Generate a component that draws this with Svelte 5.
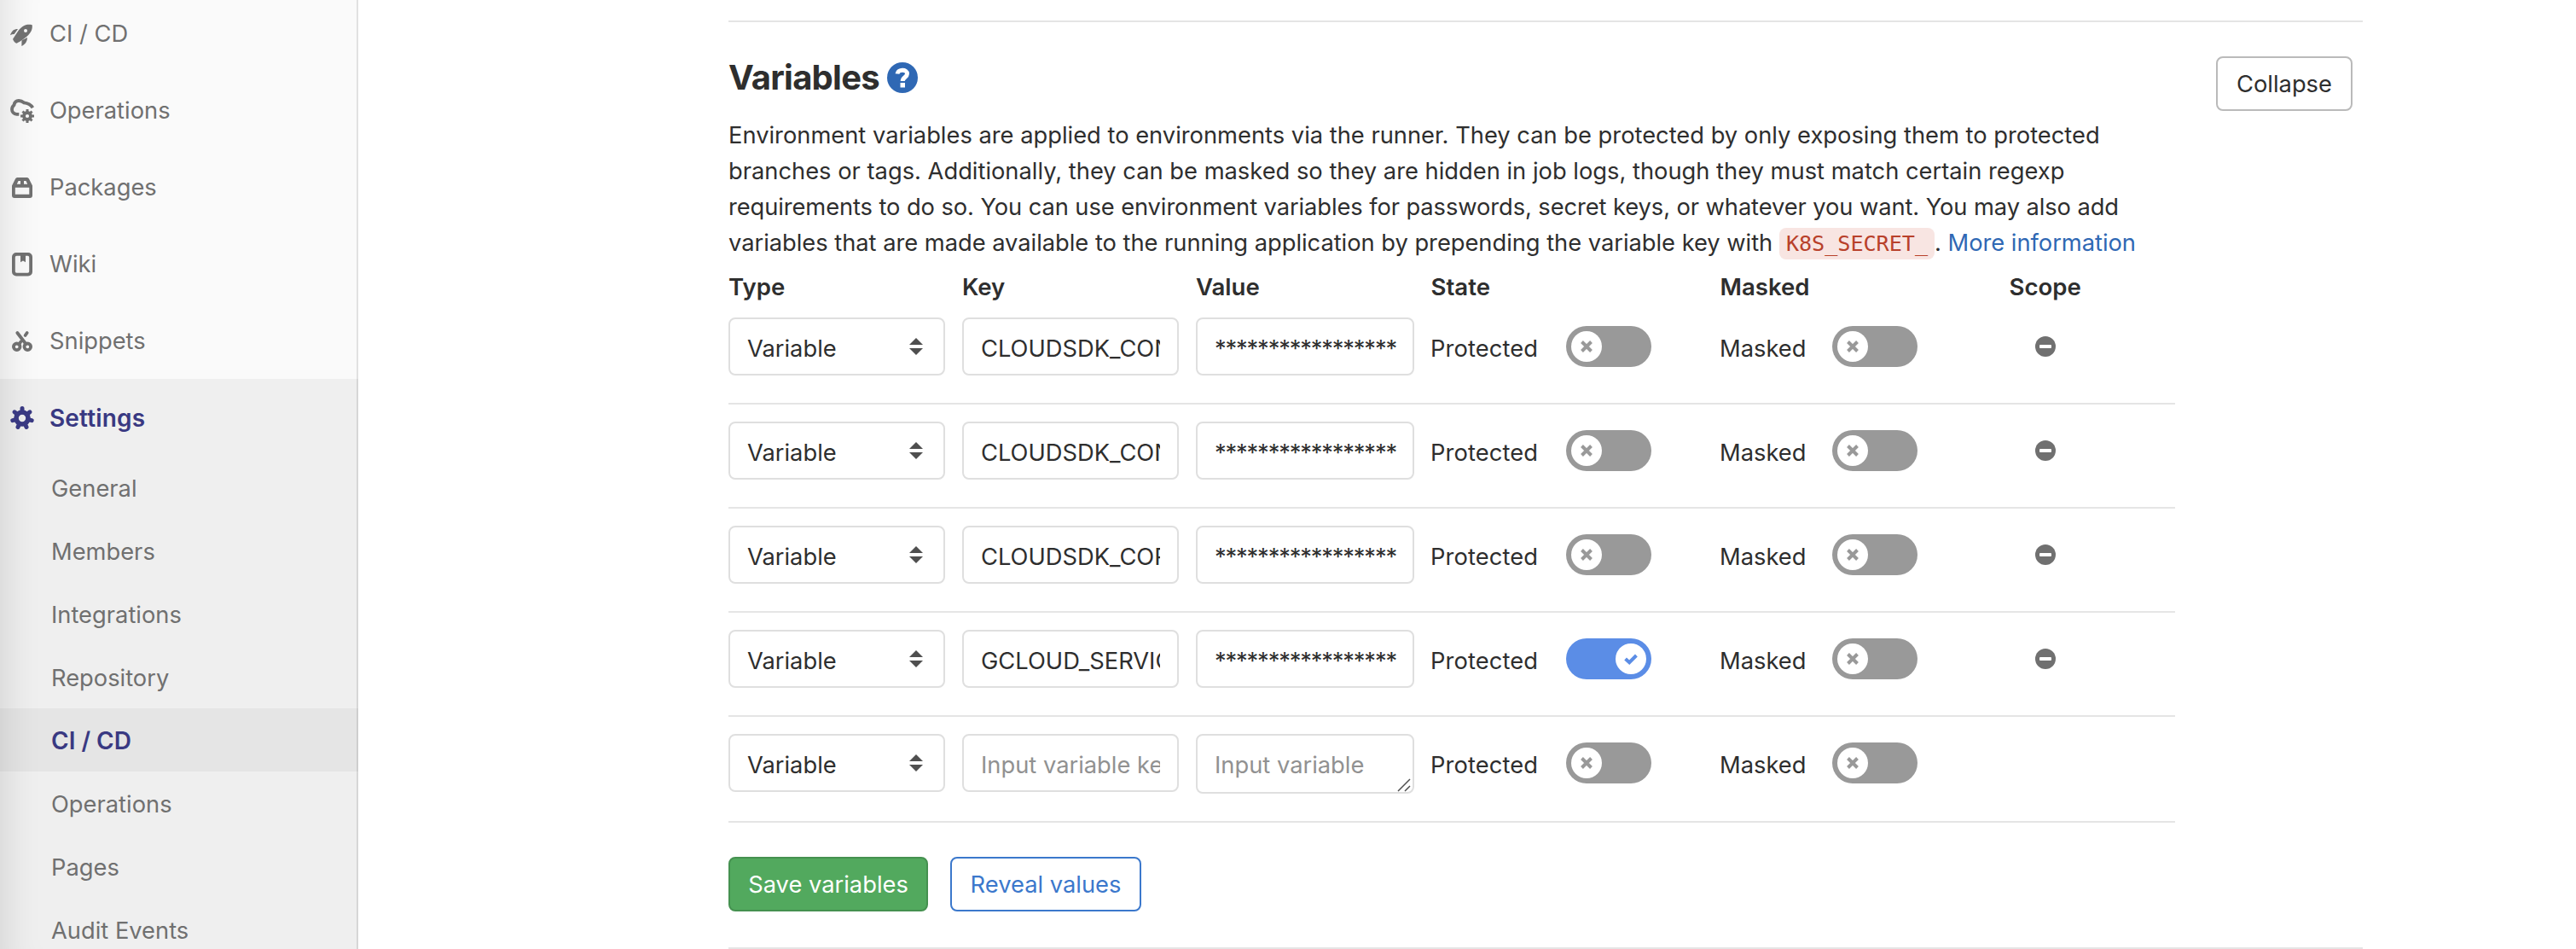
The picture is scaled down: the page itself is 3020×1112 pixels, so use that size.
<script>
  const nav = ['CI / CD', 'Operations', 'Packages', 'Wiki', 'Snippets'];
  const sub = ['General', 'Members', 'Integrations', 'Repository', 'CI / CD', 'Operations', 'Pages', 'Audit Events'];
  const heads = ['Type', 'Key', 'Value', 'State', 'Masked', 'Scope'];
  const rows = [
    { key: 'CLOUDSDK_CON', on: false },
    { key: 'CLOUDSDK_CON', on: false },
    { key: 'CLOUDSDK_COR', on: false },
    { key: 'GCLOUD_SERVIC', on: true },
    { key: null, on: false },
  ];
  const stars = '*****************';
</script>

{#snippet toggle(on)}
  <span class="toggle" class:on>
    <span class="knob">
      {#if on}
        <svg width="16" height="16" viewBox="0 0 16 16"><path d="M1.600 8 6.200 12.200 14.400 4" /></svg>
      {:else}
        <svg width="16" height="16" viewBox="0 0 16 16"><path d="M2.500 2.500 13.500 13.500M13.500 2.500 2.500 13.500" /></svg>
      {/if}
    </span>
  </span>
{/snippet}

<div class="page">
  <nav class="side">
    {#each nav as label, i}
      <a class="item" href="#top">
        <svg class="icon" width="32" height="32" viewBox="0 0 32 32">
          {#if i === 0}
            <path fill-rule="evenodd" d="M27.700 5.200c-3.700-.800-7-.300-9.400.800-3 1.500-5 3.500-6.800 6L5.200 21.500c-.500 1 2.300 5 4.300 5.200.700 0 9-5.200 12.200-8.200C25.500 15 28.500 11 27.700 5.200ZM20 10a2 2 0 1 1 0 4 2 2 0 0 1 0-4Z" />
            <path d="M2 17.300C3.500 12.500 6 10 11 10L6.700 16Q4 16 2 17.300ZM15.500 23.300 22 20C21.800 25 19.500 28 15.300 30Z" />
          {:else if i === 1}
            <path class="cloud" d="M12.300 19.800H9.500C6 19.600 4 17 4 14.300c0-2.500 1-4 2.500-5.300C7 6 9 4 12 4c2.500 0 4.500 1 6 2.300 4.500.300 8 2 10.400 6" />
            <circle class="hub" cx="22" cy="22" r="4" />
            <path class="teeth" d="M22 14v3M22 27v3M14 22h3M27 22h3M16.500 16.500l2 2M25.500 25.500l2 2M27.500 16.500l-2 2M18.500 25.500l-2 2" />
          {:else if i === 2}
            <path fill-rule="evenodd" d="M11 4h10c1.500 0 2.500.600 3.200 2L28 13.500V25a3 3 0 0 1-3 3H7a3 3 0 0 1-3-3V13.500L7.800 6C8.500 4.600 9.500 4 11 4ZM7.800 15.700v8h16.500v-8ZM11.500 8 9.800 11.700H14V8ZM18 8v3.700h4.200L20.500 8Z" />
          {:else if i === 3}
            <path fill-rule="evenodd" d="M9 2h14a5 5 0 0 1 5 5v17.500a5 5 0 0 1-5 5H9a5 5 0 0 1-5-5V7a5 5 0 0 1 5-5ZM9.500 5.800Q7.800 5.800 7.800 7.500V24Q7.800 25.800 9.500 25.800H22.500Q24.200 25.800 24.200 24V7.500Q24.200 5.800 22.500 5.800H20v7.500L17 11.500 14 13.300V5.800Z" />
          {:else}
            <circle class="ring" cx="9.700" cy="22.300" r="3.800" />
            <circle class="ring" cx="22.300" cy="22.300" r="3.800" />
            <path class="line" d="M10.300 6 20.300 19M21.700 6 19.600 9M14.300 16.500l-2 3" />
          {/if}
        </svg>
        {label}
      </a>
    {/each}
    <div class="group">
      <a class="item current" href="#top">
        <svg class="icon" width="32" height="32" viewBox="0 0 32 32">
          <circle class="gear" cx="16" cy="16" r="7" />
          <path class="cog" d="M16 9V4.500M21.500 11.600 25 8.800M22.800 17.600l4.400 1M19 22.300l2 4.100M13 22.300l-2 4.100M9.200 17.600l-4.400 1M10.500 11.600 7 8.800" />
        </svg>
        Settings
      </a>
      {#each sub as label, i}
        <a class="subitem" class:active={i === 4} href="#top">{label}</a>
      {/each}
    </div>
  </nav>

  <main>
    <section>
      <header>
        <div class="intro">
          <h4>
            Variables
            <svg width="36" height="36" viewBox="0 0 36 36">
              <circle cx="18" cy="18" r="18" />
              <path d="M12 13.500C12.500 8 23.500 7.500 23.500 13.500c0 4-5.300 4-5.300 8.500" />
              <rect x="15.500" y="24" width="5.500" height="5.500" />
            </svg>
          </h4>
          <p>
            <span>Environment variables are applied to environments via the runner. They can be protected by only exposing them to protected</span><br />
            <span>branches or tags. Additionally, they can be masked so they are hidden in job logs, though they must match certain regexp</span><br />
            <span class="tight">requirements to do so. You can use environment variables for passwords, secret keys, or whatever you want. You may also add</span><br />
            <span class="snug">variables that are made available to the running application by prepending the variable key with <code>K8S_SECRET_</code>. <a href="#top">More information</a></span>
          </p>
        </div>
        <button class="btn collapse">Collapse</button>
      </header>

      <div class="table">
        <div class="row heads">
          {#each heads as head}<b>{head}</b>{/each}
        </div>
        {#each rows as row}
          <div class="row vars">
            <div class="field select">
              <span>Variable</span>
              <svg width="16" height="20" viewBox="0 0 16 20"><path d="M0 8 8 0l8 8ZM0 12h16l-8 8Z" /></svg>
            </div>
            <div class="field" class:hint={!row.key}><span class="clip">{row.key ?? 'Input variable key'}</span></div>
            {#if row.key}
              <div class="field value"><span class="stars">{stars}</span></div>
            {:else}
              <div class="field value area hint">
                <span>Input variable value</span>
                <svg width="16" height="16" viewBox="0 0 16 16"><path d="M1 15 15 1M9 15l6-6" /></svg>
              </div>
            {/if}
            <div class="state"><span class="word">Protected</span>{@render toggle(row.on)}</div>
            <div class="state mask"><span class="word">Masked</span>{@render toggle(false)}</div>
            <div class="remove">
              {#if row.key}
                <svg width="24" height="24" viewBox="0 0 24 24"><circle cx="12" cy="12" r="12" /><rect x="5" y="10" width="14" height="4" rx="1" /></svg>
              {/if}
            </div>
          </div>
        {/each}
      </div>

      <div class="actions">
        <button class="btn save">Save variables</button>
        <button class="btn reveal">Reveal values</button>
      </div>
    </section>
  </main>
</div>

<style>
  :global(body) { background: #fff; overflow: hidden; }
  .page {
    display: flex; width: 3020px; height: 1112px; overflow: hidden;
    font: 27.300px/42px Inter, "Liberation Sans", sans-serif; color: #2e2e2e;
  }
  .page * { box-sizing: border-box; }
  a { text-decoration: none; }

  .side {
    flex: none; width: 420px; height: 1118px; margin-top: -6px; background: #fafafa;
    box-shadow: inset -2px 0 0 #e1e1e1, inset 50px 0 50px -50px rgba(0, 0, 0, 0.14);
  }
  .item { display: flex; align-items: center; gap: 16px; height: 90px; padding: 2px 0 0 10px; color: #707070; }
  .icon { flex: none; fill: #707070; }
  .icon .line, .icon .ring, .icon .cloud, .icon .hub { fill: none; stroke: #707070; stroke-width: 3.800; }
  .icon .line { stroke-linecap: round; }
  .icon .teeth { stroke: #707070; stroke-width: 3; }
  .group { height: 700px; background: rgba(0, 0, 0, 0.043); }
  .current { color: #393982; font-size: 28px; font-weight: 600; letter-spacing: 0.150px; }
  .icon .gear { fill: none; stroke: #393982; stroke-width: 5.600; }
  .icon .cog { stroke: #393982; stroke-width: 5; stroke-linecap: round; }
  .subitem { display: block; height: 74px; padding: 2px 0 0 60px; line-height: 74px; color: #707070; }
  .active { padding-top: 1px; background: rgba(0, 0, 0, 0.04); color: #393982; font-size: 28px; font-weight: 600; }

  main { padding-left: 434px; }
  section {
    width: 1916px; height: 1088px; margin-top: 24px;
    border-top: 2px solid #e5e5e5; border-bottom: 2px solid #e5e5e5;
  }
  header { display: flex; justify-content: space-between; padding: 40px 12px 0 0; }
  .intro { width: 1700px; white-space: nowrap; }
  h4 {
    display: flex; align-items: center; gap: 9px; height: 50px; margin: 0;
    font-size: 40px; font-weight: 650; letter-spacing: -0.750px;
  }
  h4 circle { fill: #2f68b4; }
  h4 path { fill: none; stroke: #fff; stroke-width: 5; }
  h4 rect { fill: #fff; }
  p { height: 168px; margin: 22px 0 0; }
  p a { color: #2f68b4; }
  .tight { letter-spacing: -0.087px; }
  .snug { letter-spacing: -0.025px; }
  code {
    padding: 4px 8px; border-radius: 8px; background: #f8e5e2; color: #b8412b;
    font: 25.200px "DejaVu Sans Mono", monospace; letter-spacing: -0.060px;
  }
  .btn {
    height: 64px; padding: 1px 0 0; border: 2px solid #bababa; border-radius: 8px;
    background: #fff; color: #2e2e2e; font: inherit;
  }
  .collapse { width: 160px; }

  .table { width: 1696px; }
  .row { display: grid; grid-template-columns: 254px 254px 254px 319px 319px 1fr; column-gap: 20px; }
  .heads { height: 66px; padding-top: 9px; font-size: 27.600px; }
  .heads b { font-weight: 600; }
  .heads b:nth-child(n + 4) { padding-left: 1.500px; }
  .vars { align-items: start; padding-bottom: 32px; border-bottom: 2px solid #e5e5e5; margin-bottom: 20px; }
  .field {
    display: flex; height: 68px; padding: 3px 20px 0; border: 2px solid #dfdfdf; border-radius: 8px;
    line-height: 64px; white-space: nowrap;
  }
  .select { justify-content: space-between; padding-right: 24px; }
  .select svg { margin-top: 19px; fill: #4f4f4f; }
  .value { width: 256px; }
  .clip { flex: 1; min-width: 0; height: 60px; overflow: hidden; }
  .stars { letter-spacing: -1.150px; }
  .hint { color: #919191; }
  .area {
    position: relative; height: 70px; padding-top: 14px; overflow: hidden;
    line-height: 42px; white-space: normal;
  }
  .area svg { position: absolute; right: 2px; bottom: 0; fill: none; stroke: #4f4f4f; stroke-width: 1.500; }
  .state { display: flex; align-items: center; height: 68px; }
  .word { width: 160px; padding: 5px 0 0 1px; letter-spacing: 0.100px; }
  .mask .word { width: 133px; letter-spacing: 0; }
  .toggle { display: flex; width: 100px; height: 48px; padding: 6px; border-radius: 24px; background: #999; }
  .toggle.on { justify-content: flex-end; background: #5b8de6; }
  .knob { display: flex; align-items: center; justify-content: center; width: 36px; height: 36px; border-radius: 50%; background: #fff; }
  .knob path { fill: none; stroke: #999; stroke-width: 4; }
  .on .knob path { stroke: #5b8de6; }
  .remove { display: flex; align-items: center; height: 68px; padding-left: 32px; }
  .remove circle { fill: #707070; }
  .remove rect { fill: #fff; }

  .actions { display: flex; gap: 26px; margin-top: 40px; }
  .save { width: 234px; border-color: #459150; background: #52a95e; color: #fff; }
  .reveal { width: 224px; border-color: #3b78cc; color: #3b78cc; }
</style>
